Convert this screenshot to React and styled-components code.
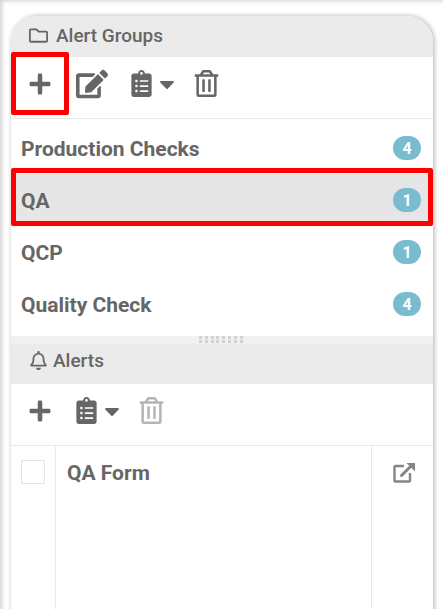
import styled, { createGlobalStyle } from 'styled-components';
import { FaPlus, FaEdit, FaClipboardList, FaRegTrashAlt, FaCaretDown, FaRegFolder, FaRegBell } from 'react-icons/fa';

const GlobalStyle = createGlobalStyle`
  html, body {
    margin: 0;
    padding: 0;
    background: #fff;
    overflow: hidden;
  }
  body {
    font-family: Roboto, "Liberation Sans", sans-serif;
    color: #666;
  }
`;

const Page = styled.div`
  width: 443px;
  height: 609px;
  padding: 16px 10px 0 11px;
  box-sizing: border-box;
  overflow: hidden;
  box-shadow: inset 3px 2px 4px -1px rgba(0, 0, 0, 0.18);
`;

const Panel = styled.div`
  height: 620px;
  background: #fff;
  border-radius: 26px 26px 0 0;
  box-shadow: 1px 0 5px rgba(0, 0, 0, 0.32);
  display: flex;
  flex-direction: column;
`;

const SectionHeader = styled.div`
  height: ${(p) => p.$height}px;
  flex: none;
  box-sizing: border-box;
  display: flex;
  align-items: center;
  gap: ${(p) => p.$gap}px;
  padding: 0 0 ${(p) => p.$lift || 0}px 18px;
  background: ${(p) => (p.$splitter ? 'linear-gradient(#f1f1f1 0, #f1f1f1 6px, #ebebeb 10px)' : '#ebebeb')};
  font-size: 19px;
  font-weight: 500;
  color: #666;
  border-radius: ${(p) => (p.$rounded ? '26px 26px 0 0' : '0')};
  svg {
    font-size: 19px;
  }
`;

const Toolbar = styled.div`
  height: 62px;
  flex: none;
  box-sizing: border-box;
  display: flex;
  align-items: center;
  padding-bottom: 8px;
  border-bottom: 1px solid #e8e8e8;
  color: #666;
`;

const ToolButton = styled.div`
  width: ${(p) => p.$width}px;
  height: ${(p) => (p.$marked ? '63px' : '62px')};
  flex: none;
  box-sizing: border-box;
  display: flex;
  align-items: center;
  justify-content: center;
  color: ${(p) => (p.$disabled ? '#b5b5b5' : '#666')};
  border: ${(p) => (p.$marked ? '5px solid #f00' : 'none')};
  border-radius: 2px;
`;

const GroupList = styled.div`
  flex: none;
  height: 217px;
  box-sizing: border-box;
  padding-top: 3px;
`;

const GroupRow = styled.div`
  height: 52px;
  box-sizing: border-box;
  position: relative;
  display: flex;
  align-items: center;
  justify-content: space-between;
  padding: 2px 12px 0 10px;
  font-size: 21px;
  font-weight: 700;
  color: #666;
  background: ${(p) => (p.$selected ? '#e6e6e6' : 'transparent')};

  /* the red annotation frame sits over the selected row */
  &::after {
    content: '';
    display: ${(p) => (p.$selected ? 'block' : 'none')};
    position: absolute;
    inset: -6px 0 0 0;
    border: 5px solid #f00;
    border-radius: 2px;
  }
`;

const Badge = styled.span`
  width: 28px;
  height: 24px;
  margin-top: -2px;
  border-radius: 12px;
  background: #7abccf;
  color: #fff;
  font-size: 16px;
  font-weight: 700;
  display: flex;
  align-items: center;
  justify-content: center;
`;

const HeaderWrap = styled.div`
  position: relative;
  flex: none;
`;

const Grip = styled.div`
  position: absolute;
  top: 0;
  left: 188px;
  display: grid;
  grid-template-columns: repeat(8, 3px);
  gap: 1px 2.8px;
`;

const GripDot = styled.span`
  width: 3px;
  height: 3px;
  background: #d2d2d2;
`;

const FormTable = styled.div`
  flex: 1;
  display: grid;
  grid-template-columns: 45px 1fr 61px;
`;

const CheckCell = styled.div`
  padding: 14px 0 0 10px;
  border-right: 1px solid #e8e8e8;
`;

const CheckBox = styled.div`
  width: 22px;
  height: 22px;
  border: 1px solid #e4e4e4;
`;

const NameCell = styled.div`
  padding: 15px 0 0 11px;
  font-size: 21px;
  font-weight: 700;
  color: #666;
  line-height: 24px;
  border-right: 1px solid #e8e8e8;
`;

const LinkCell = styled.div`
  padding: 16px 0 0 21px;
  color: #858585;
`;

const OpenIcon = () => (
  <svg width="23" height="21" viewBox="0 0 23 21" fill="none" stroke="currentColor">
    <path d="M11 4H2.5a1 1 0 0 0-1 1v13.5a1 1 0 0 0 1 1H16a1 1 0 0 0 1-1V11" strokeWidth="2.4" />
    <path d="M8.5 13.5L19 3" strokeWidth="3" strokeLinecap="round" />
    <path d="M13.5 1h8.5v8.5z" fill="currentColor" stroke="none" />
  </svg>
);

const groups = [
  { name: 'Production Checks', count: 4 },
  { name: 'QA', count: 1, selected: true },
  { name: 'QCP', count: 1 },
  { name: 'Quality Check', count: 4 },
];

export default function App() {
  return (
    <Page>
      <GlobalStyle />
      <Panel>
        <SectionHeader $height={41} $gap={8} $lift={3} $rounded>
          <FaRegFolder /> Alert Groups
        </SectionHeader>
        <Toolbar>
          <ToolButton $width={58} $marked><FaPlus size={24} /></ToolButton>
          <ToolButton $width={46}><FaEdit size={32} /></ToolButton>
          <ToolButton $width={76}><FaClipboardList size={27} /><FaCaretDown size={24} /></ToolButton>
          <ToolButton $width={30}><FaRegTrashAlt size={27} /></ToolButton>
        </Toolbar>
        <GroupList>
          {groups.map((g) => (
            <GroupRow key={g.name} $selected={g.selected}>
              {g.name}
              <Badge>{g.count}</Badge>
            </GroupRow>
          ))}
        </GroupList>
        <HeaderWrap>
          <SectionHeader $height={48} $gap={5} $splitter>
            <FaRegBell /> Alerts
          </SectionHeader>
          <Grip>
            {Array.from({ length: 16 }, (_, i) => <GripDot key={i} />)}
          </Grip>
        </HeaderWrap>
        <Toolbar>
          <ToolButton $width={58}><FaPlus size={24} /></ToolButton>
          <ToolButton $width={58}><FaClipboardList size={27} /><FaCaretDown size={24} /></ToolButton>
          <ToolButton $width={49} $disabled><FaRegTrashAlt size={27} /></ToolButton>
        </Toolbar>
        <FormTable>
          <CheckCell><CheckBox /></CheckCell>
          <NameCell>QA Form</NameCell>
          <LinkCell><OpenIcon /></LinkCell>
        </FormTable>
      </Panel>
    </Page>
  );
}
